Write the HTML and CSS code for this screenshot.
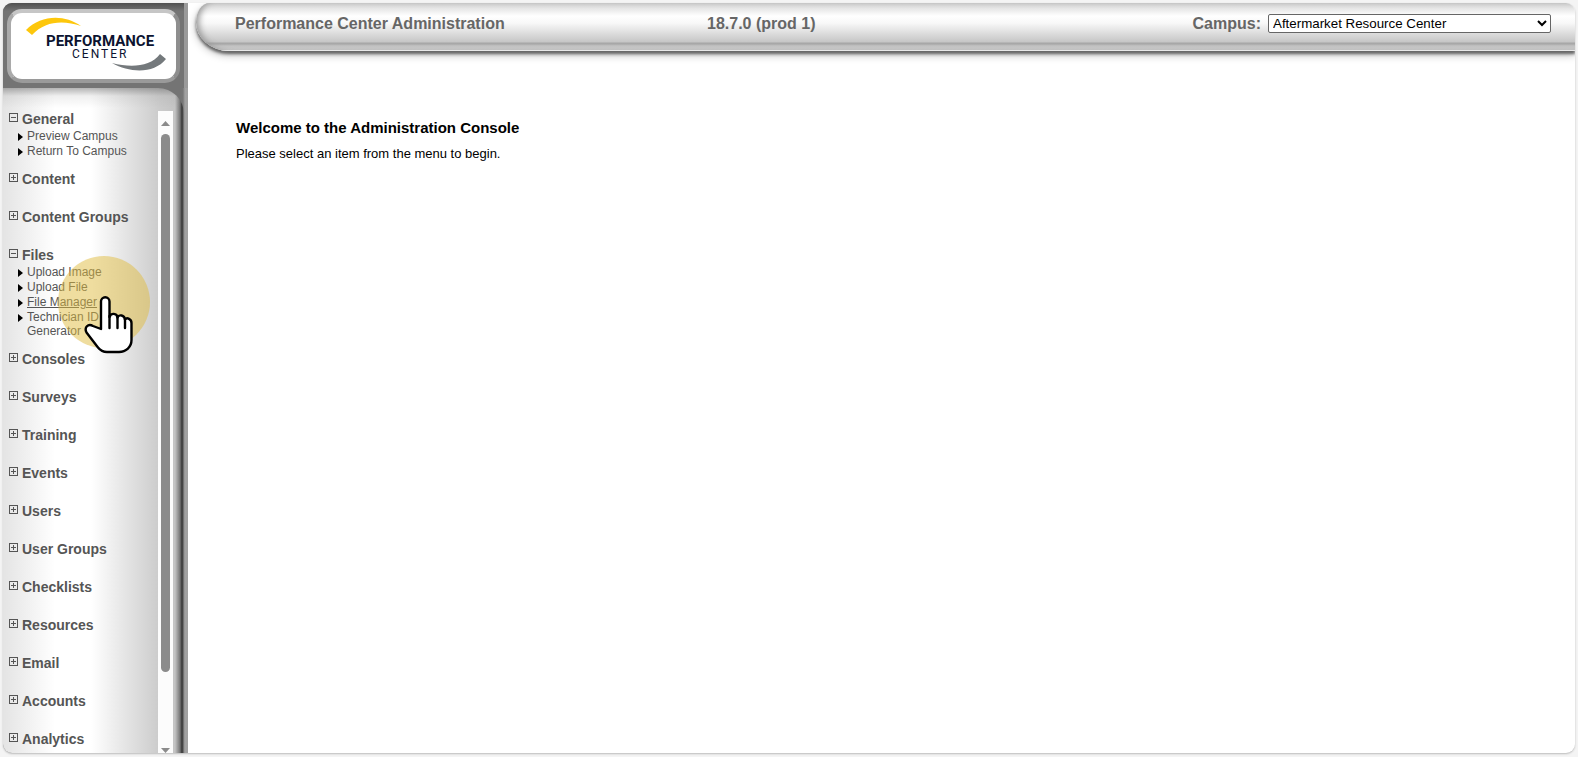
FILE: index.html
```html
<!DOCTYPE html>
<html lang="en">
<head>
<meta charset="utf-8">
<title>Performance Center Administration</title>
<link rel="stylesheet" href="styles.css">
</head>
<body>
<div class="frame">
  <aside class="sidebar">
    <div class="brand">
      <div class="brand-plate">
        <svg class="logo" viewBox="0 0 165 66" role="img" aria-label="Performance Center">
          <path d="M15 17C30 2 53 1 70 13C52 7 34 8 21 22Z" fill="#fdc70c"/>
          <path d="M101 50C120 55 139 54 149 41L155 46C143 61 119 60 101 50Z" fill="#74797c"/>
          <text class="logo-name" x="35" y="33">PERFORMANCE</text>
          <text class="logo-sub" x="61" y="45">CENTER</text>
        </svg>
      </div>
    </div>
    <div class="panel">
      <div class="panel-body">
        <nav class="menu">
          <section class="group open"><button class="head"><span class="box minus"></span>General</button>
            <ul><li><a href="#">Preview Campus</a></li><li><a href="#">Return To Campus</a></li></ul></section>
          <section class="group"><button class="head"><span class="box plus"></span>Content</button></section>
          <section class="group"><button class="head"><span class="box plus"></span>Content Groups</button></section>
          <section class="group open"><button class="head"><span class="box minus"></span>Files</button>
            <ul><li><a href="#">Upload Image</a></li><li><a href="#">Upload File</a></li><li><a href="#" class="current">File Manager</a></li><li><a href="#">Technician ID<br>Generator</a></li></ul></section>
          <section class="group"><button class="head"><span class="box plus"></span>Consoles</button></section>
          <section class="group"><button class="head"><span class="box plus"></span>Surveys</button></section>
          <section class="group"><button class="head"><span class="box plus"></span>Training</button></section>
          <section class="group"><button class="head"><span class="box plus"></span>Events</button></section>
          <section class="group"><button class="head"><span class="box plus"></span>Users</button></section>
          <section class="group"><button class="head"><span class="box plus"></span>User Groups</button></section>
          <section class="group"><button class="head"><span class="box plus"></span>Checklists</button></section>
          <section class="group"><button class="head"><span class="box plus"></span>Resources</button></section>
          <section class="group"><button class="head"><span class="box plus"></span>Email</button></section>
          <section class="group"><button class="head"><span class="box plus"></span>Accounts</button></section>
          <section class="group"><button class="head"><span class="box plus"></span>Analytics</button></section>
        </nav>
        <div class="track">
          <svg class="arrow" viewBox="0 0 9 5"><path d="M0 5L4.500 0L9 5Z"/></svg>
          <div class="rail"><div class="thumb"></div></div>
          <svg class="arrow" viewBox="0 0 9 5"><path d="M0 0L4.500 5L9 0Z"/></svg>
        </div>
      </div>
    </div>
  </aside>
  <div class="main">
    <header class="topbar">
      <div class="bar">
        <span class="title">Performance Center Administration</span>
        <span class="version">18.7.0 (prod 1)</span>
        <div class="campus">
          <label for="campus">Campus:</label>
          <select id="campus"><option>Aftermarket Resource Center</option></select>
        </div>
      </div>
    </header>
    <main class="content">
      <h1>Welcome to the Administration Console</h1>
      <p>Please select an item from the menu to begin.</p>
    </main>
  </div>
</div>
<svg class="pointer" viewBox="0 0 92 100" aria-hidden="true">
  <circle cx="46" cy="46" r="46" fill="#e0bc40" fill-opacity=".5"/>
  <path d="M43 73V45.500a4 4 0 0 1 8.500 0V61C53 56.500 59 57 59.500 61.500C61 58 66.500 59 67 63.500C69 61 73.500 63 73.500 67V84C73.500 91 68 96 61 96H49C45 96 42 94 40 91.500L28.500 76.500C26 71.500 30 67 35 70Z" fill="#fff" stroke="#000" stroke-width="2.400" stroke-linejoin="round"/>
  <path d="M51.500 60V72M59.500 61V72M67 63V72" fill="none" stroke="#000" stroke-width="2.400" stroke-linecap="round"/>
</svg>
</body>
</html>
```
FILE: styles.css
```css
* { box-sizing: border-box; }
body {
  margin: 0;
  height: 100vh;
  padding: 3px 3px 4px;
  background: #f4f4f4;
  font-family: "Liberation Sans", Arial, sans-serif;
}
.frame {
  display: flex;
  height: 100%;
  border-radius: 9px;
  overflow: hidden;
  background: #fff;
  box-shadow: 0 1px 2px #bbb;
}
.sidebar {
  flex: none;
  width: 185px;
  display: flex;
  flex-direction: column;
  background: linear-gradient(90deg, #747474 0 178px, #777 180px, #a2a2a2 182px, #a0a0a0);
}
.brand {
  flex: none;
  height: 85px;
  padding: 6px 4px 5px;
  background: linear-gradient(#505050, #747474 8px, #747474);
  border-right: 4px solid #9a9a9a;
}
.brand-plate {
  height: 74px;
  border: 4px solid;
  border-color: #c6c6c6 #8e8e8e #9a9a9a #aaa;
  border-radius: 15px;
  background: #fff;
}
.logo { display: block; width: 165px; height: 66px; }
.logo-name { font: bold 15px Roboto, sans-serif; fill: #0c1330; }
.logo-sub { font: 12px Roboto, sans-serif; letter-spacing: 2px; fill: #0c1330; }
.panel {
  flex: 1;
  min-height: 0;
  width: 181px;
  padding-top: 23px;
  border-radius: 0 26px 0 0;
  background:
    linear-gradient(rgba(90, 90, 90, .45), rgba(150, 150, 150, .15) 8px, transparent 20px),
    linear-gradient(90deg, #e4e4e4, #fff 52px, #fff 88px, #ccc 155px, #c4c4c4 172px, #777 177px, #333 179px, #555 180px, #8a8a8a);
}
.panel-body { display: flex; height: 100%; }
.menu { width: 155px; padding-left: 5px; overflow: hidden; }
.group { padding-bottom: 20px; }
.group.open { padding-bottom: 12px; }
.head {
  display: flex;
  align-items: center;
  gap: 4px;
  height: 18px;
  padding: 0 0 2px 1px;
  border: 0;
  background: none;
  color: #555;
  font: bold 14px "Liberation Sans", Arial, sans-serif;
}
.box {
  width: 9px;
  height: 9px;
  margin-bottom: 3px;
  border: 1px solid #555;
}
.minus { background: linear-gradient(#555, #555) center / 5px 1px no-repeat; }
.plus {
  background:
    linear-gradient(#555, #555) center / 5px 1px no-repeat,
    linear-gradient(#555, #555) center / 1px 5px no-repeat;
}
.group ul { margin: 0; padding: 0 0 0 10px; list-style: none; }
.group li {
  display: flex;
  align-items: flex-start;
  gap: 4px;
  padding-bottom: 1px;
  font-size: 12px;
  line-height: 14px;
}
.group li::before {
  content: "";
  margin-top: 4px;
  border: solid transparent;
  border-width: 4px 0 4px 5px;
  border-left-color: #000;
}
.group a { color: #555; text-decoration: none; }
.group a.current { text-decoration: underline; }
.track {
  width: 15px;
  display: flex;
  flex-direction: column;
  align-items: center;
  padding-top: 10px;
  background: #fcfcfc;
}
.arrow { flex: none; width: 9px; height: 5px; fill: #8b8b8b; }
.rail { flex: 1; width: 9px; padding-top: 8px; }
.thumb { height: calc(88% - 2px); border-radius: 5px; background: #8b8b8b; }
.main { flex: 1; min-width: 0; }
.topbar { height: 68px; padding-left: 8px; overflow: hidden; }
.bar {
  display: flex;
  align-items: center;
  height: 48px;
  padding: 0 24px 7px 39px;
  border-radius: 14px 0 0 34px / 20px 0 0 30px;
  background: linear-gradient(#d4d4d4, #fff 13px, #f8f8f8 20px, #c6c6c6 39px, #a6a6a6 40px, #a9a9a9 41px, #c4c4c4 43px, #c9c9c9 47px, #fff 47px);
  box-shadow: 0 3px 3px #666, 0 4px 8px #bbb, inset 5px 0 6px -2px #999;
  color: #666;
  font-size: 16px;
  font-weight: bold;
}
.title { flex: 0 0 472px; }
.campus { display: flex; align-items: center; gap: 7px; margin-left: auto; }
.campus select {
  width: 283px;
  height: 19px;
  padding: 0;
  border: 1px solid #666;
  border-radius: 2px;
  background-color: #fff;
  color: #000;
  font-family: "Liberation Sans", Arial, sans-serif;
}
.content { padding: 48px 48px 0; color: #000; }
.content h1 { margin: 0 0 9px; font-size: 15px; line-height: 18px; }
.content p { margin: 0; font-size: 13px; line-height: 16px; }
.pointer { position: absolute; left: 58px; top: 256px; width: 92px; height: 100px; pointer-events: none; }
```
